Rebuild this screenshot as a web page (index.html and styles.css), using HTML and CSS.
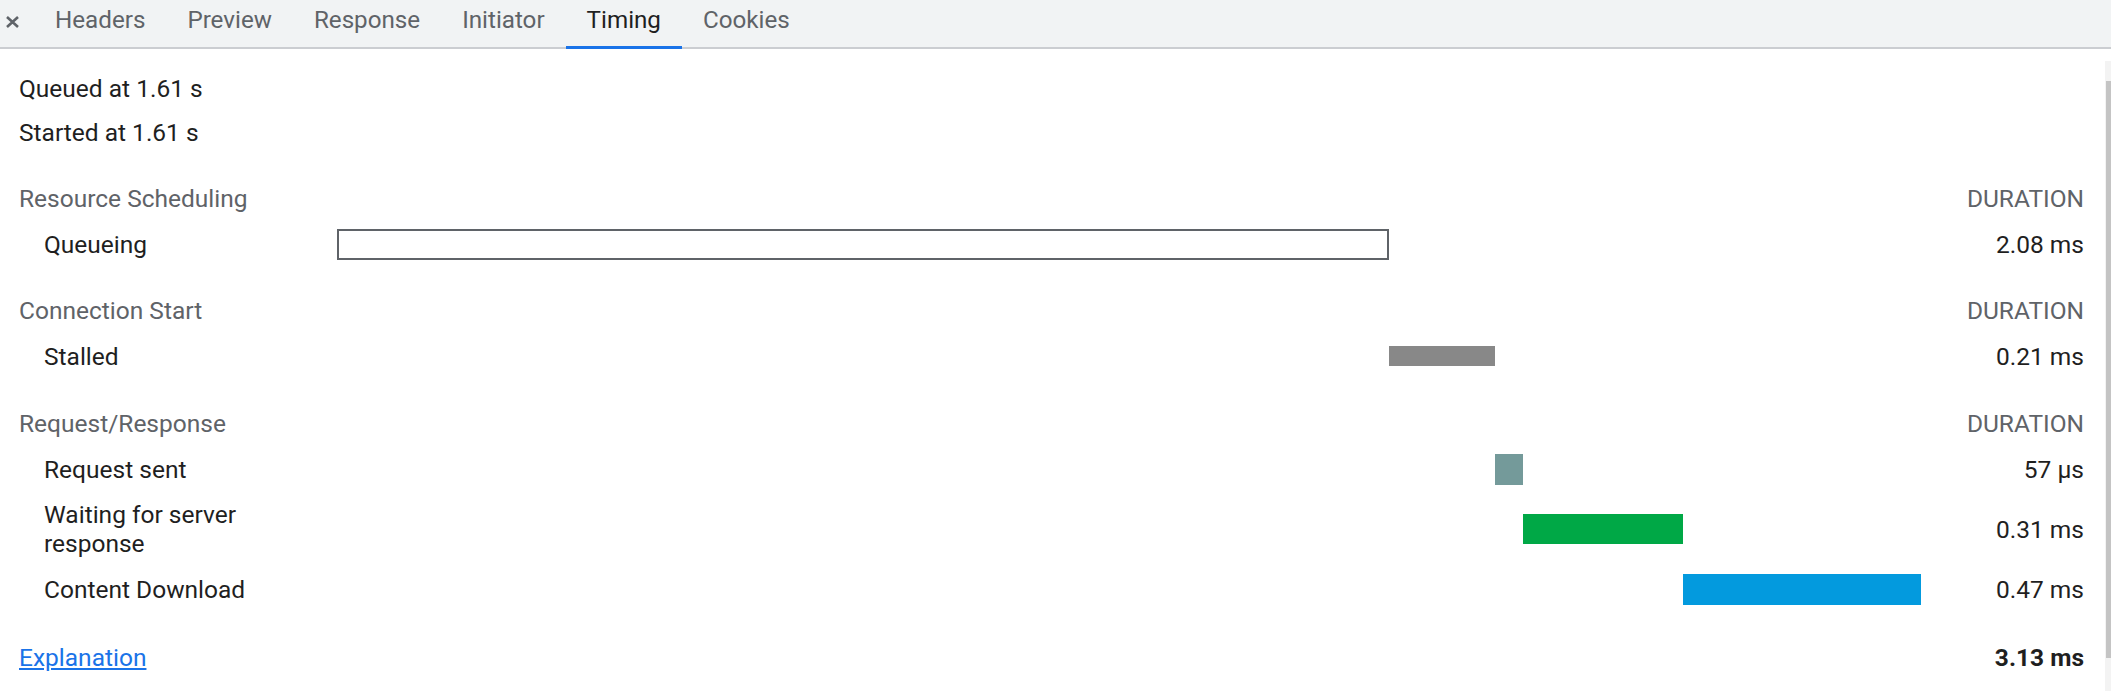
FILE: index.html
```html
<!DOCTYPE html>
<html lang="en">
<head>
<meta charset="utf-8">
<title>Timing</title>
<link rel="stylesheet" href="styles.css">
</head>
<body>
<div class="tabbar">
  <div class="close">
    <svg width="15" height="12" viewBox="0 0 15 12" aria-hidden="true"><path d="M2 1 L13 11 M13 1 L2 11" stroke="#5f6368" stroke-width="2.6" fill="none"/></svg>
  </div>
  <div class="tab">Headers</div>
  <div class="tab">Preview</div>
  <div class="tab">Response</div>
  <div class="tab">Initiator</div>
  <div class="tab active">Timing</div>
  <div class="tab">Cookies</div>
</div>
<div class="main">
  <div class="content">
    <div class="meta">Queued at 1.61 s</div>
    <div class="meta">Started at 1.61 s</div>

    <div class="row head first"><div class="label">Resource Scheduling</div><div></div><div class="value">DURATION</div></div>
    <div class="row item">
      <div class="label">Queueing</div>
      <div class="track"><div class="bar queueing" style="margin-left:0%;width:66.41%"></div></div>
      <div class="value">2.08 ms</div>
    </div>

    <div class="row head second"><div class="label">Connection Start</div><div></div><div class="value">DURATION</div></div>
    <div class="row item">
      <div class="label">Stalled</div>
      <div class="track"><div class="bar stalled" style="margin-left:66.41%;width:6.69%"></div></div>
      <div class="value">0.21 ms</div>
    </div>

    <div class="row head"><div class="label">Request/Response</div><div></div><div class="value">DURATION</div></div>
    <div class="row item">
      <div class="label">Request sent</div>
      <div class="track"><div class="bar sending" style="margin-left:73.11%;width:1.77%"></div></div>
      <div class="value">57 μs</div>
    </div>
    <div class="row item tall">
      <div class="label">Waiting for server response</div>
      <div class="track"><div class="bar waiting" style="margin-left:74.87%;width:10.10%"></div></div>
      <div class="value">0.31 ms</div>
    </div>
    <div class="row item">
      <div class="label">Content Download</div>
      <div class="track"><div class="bar download" style="margin-left:84.97%;width:15.03%"></div></div>
      <div class="value">0.47 ms</div>
    </div>

    <div class="row foot">
      <div class="foot-label"><a class="link" href="#">Explanation</a></div>
      <div></div>
      <div class="value total">3.13 ms</div>
    </div>
  </div>
  <div class="scrollbar"><div class="thumb"></div></div>
</div>
</body>
</html>
```

FILE: styles.css
```css
* { box-sizing: border-box; }
html, body { margin: 0; padding: 0; }
body {
  width: 2111px;
  height: 691px;
  overflow: hidden;
  background: #ffffff;
  color: #1f1f1f;
  font-family: Roboto, "Liberation Sans", Arial, sans-serif;
  font-size: 24.5px;
}

.tabbar {
  display: flex;
  height: 49px;
  background: #f1f3f4;
  border-bottom: 2px solid #cbcdd1;
  font-size: 24.2px;
}
.close {
  width: 34px;
  padding-left: 5px;
  padding-top: 16px;
}
.close svg { display: block; }
.tab {
  position: relative;
  padding: 6px 21px 0;
  line-height: 28px;
  color: #5f6368;
  white-space: nowrap;
}
.tab.active { color: #1f1f1f; }
.tab.active::after {
  content: "";
  position: absolute;
  left: 0;
  right: 0;
  bottom: -2px;
  height: 3px;
  background: #1a73e8;
}

.main {
  display: flex;
  height: 642px;
}
.content {
  flex: 1;
  padding: 18px 21px 0 19px;
}
.scrollbar {
  width: 6px;
  margin-top: 12px;
  background: #f3f3f3;
  padding-top: 20px;
}
.thumb {
  margin-left: 1px;
  width: 5px;
  height: 577px;
  background: #c4c4c4;
}

.meta {
  height: 44px;
  line-height: 44px;
}

.row {
  display: grid;
  grid-template-columns: 318px 1fr 163px;
  align-items: center;
}
.row.head {
  height: 44px;
  margin-top: 21px;
  color: #5f6368;
}
.row.head.first { margin-top: 21px; }
.row.head.second { margin-top: 20px; }
.row.item { height: 48px; }
.row.item.tall { height: 72px; }
.row.foot {
  height: 44px;
  margin-top: 22px;
}
.item .label {
  padding-left: 25px;
  padding-right: 20px;
  line-height: 29px;
}
.value {
  text-align: right;
  white-space: nowrap;
}
.total { font-weight: 700; }

.track {
  display: flex;
  align-items: center;
}
.bar {
  flex: none;
  height: 31px;
}
.bar.queueing {
  background: #ffffff;
  border: 2px solid #5f6368;
}
.bar.stalled {
  height: 20px;
  background: #888888;
}
.bar.sending { background: #749a9a; }
.bar.waiting {
  height: 30px;
  background: #00a846;
}
.bar.download { background: #039ade; }

.link {
  color: #1a73e8;
  text-decoration: underline;
}
```
